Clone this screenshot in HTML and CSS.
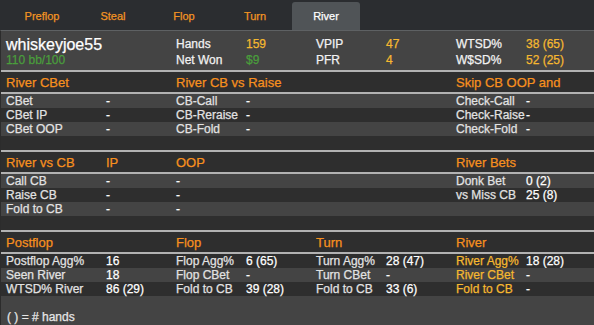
FILE: index.html
```html
<!DOCTYPE html>
<html>
<head>
<meta charset="utf-8">
<link rel="stylesheet" href="styles.css">
</head>
<body>
<div class="tabs">
  <div class="tab">Preflop</div>
  <div class="tab">Steal</div>
  <div class="tab">Flop</div>
  <div class="tab">Turn</div>
  <div class="tab active">River</div>
</div>
<div class="panel">
  <div class="grid head">
    <div class="name-cell">
      <div class="name">whiskeyjoe55</div>
      <div class="green small">110 bb/100</div>
    </div>
    <div class="c2">Hands</div><div class="c3 yellow">159</div>
    <div class="c4">VPIP</div><div class="c5 yellow">47</div>
    <div class="c6">WTSD%</div><div class="c7 yellow">38 (65)</div>
    <div class="c2">Net Won</div><div class="c3 green">$9</div>
    <div class="c4">PFR</div><div class="c5 yellow">4</div>
    <div class="c6">W$SD%</div><div class="c7 yellow">52 (25)</div>
  </div>
  <div class="sep"></div>

  <div class="grid sec-h">
    <div class="c0">River CBet</div>
    <div class="c2">River CB vs Raise</div>
    <div class="c6 wide">Skip CB OOP and</div>
  </div>
  <div class="sep"></div>
  <div class="grid row light">
    <div class="c0">CBet</div><div class="c1 v">-</div>
    <div class="c2">CB-Call</div><div class="c3 v">-</div>
    <div class="c6">Check-Call</div><div class="c7 v">-</div>
  </div>
  <div class="grid row dark">
    <div class="c0">CBet IP</div><div class="c1 v">-</div>
    <div class="c2">CB-Reraise</div><div class="c3 v">-</div>
    <div class="c6">Check-Raise</div><div class="c7 v">-</div>
  </div>
  <div class="grid row light">
    <div class="c0">CBet OOP</div><div class="c1 v">-</div>
    <div class="c2">CB-Fold</div><div class="c3 v">-</div>
    <div class="c6">Check-Fold</div><div class="c7 v">-</div>
  </div>
  <div class="spacer dark"></div>
  <div class="sep"></div>

  <div class="grid sec-h">
    <div class="c0">River vs CB</div>
    <div class="c1">IP</div>
    <div class="c2">OOP</div>
    <div class="c6">River Bets</div>
  </div>
  <div class="sep"></div>
  <div class="grid row light">
    <div class="c0">Call CB</div><div class="c1 v">-</div>
    <div class="c2 v">-</div>
    <div class="c6">Donk Bet</div><div class="c7 v">0 (2)</div>
  </div>
  <div class="grid row dark">
    <div class="c0">Raise CB</div><div class="c1 v">-</div>
    <div class="c2 v">-</div>
    <div class="c6">vs Miss CB</div><div class="c7 v">25 (8)</div>
  </div>
  <div class="grid row light">
    <div class="c0">Fold to CB</div><div class="c1 v">-</div>
    <div class="c2 v">-</div>
  </div>
  <div class="spacer dark"></div>
  <div class="sep"></div>

  <div class="grid sec-h">
    <div class="c0">Postflop</div>
    <div class="c2">Flop</div>
    <div class="c4">Turn</div>
    <div class="c6">River</div>
  </div>
  <div class="sep"></div>
  <div class="grid row dark">
    <div class="c0">Postflop Agg%</div><div class="c1 v">16</div>
    <div class="c2">Flop Agg%</div><div class="c3 v">6 (65)</div>
    <div class="c4">Turn Agg%</div><div class="c5 v">28 (47)</div>
    <div class="c6 yellow">River Agg%</div><div class="c7 v">18 (28)</div>
  </div>
  <div class="grid row light">
    <div class="c0">Seen River</div><div class="c1 v">18</div>
    <div class="c2">Flop CBet</div><div class="c3 v">-</div>
    <div class="c4">Turn CBet</div><div class="c5 v">-</div>
    <div class="c6 yellow">River CBet</div><div class="c7 v">-</div>
  </div>
  <div class="grid row dark">
    <div class="c0">WTSD% River</div><div class="c1 v">86 (29)</div>
    <div class="c2">Fold to CB</div><div class="c3 v">39 (28)</div>
    <div class="c4">Fold to CB</div><div class="c5 v">33 (6)</div>
    <div class="c6 yellow">Fold to CB</div><div class="c7 v">-</div>
  </div>
  <div class="footer">( ) = # hands</div>
</div>
</body>
</html>
```
FILE: styles.css
```css
html, body {
  margin: 0;
  padding: 0;
}
body {
  width: 594px;
  height: 325px;
  overflow: hidden;
  background: #2b2d30;
  font-family: "Liberation Sans", Arial, sans-serif;
  color: #e6e6e6;
  -webkit-text-stroke: 0.25px currentColor;
}
.tabs {
  display: flex;
  gap: 3px;
  height: 30px;
  padding-left: 8px;
  box-sizing: border-box;
  padding-top: 2px;
  background: #2b2d30;
}
.tab {
  width: 68px;
  height: 28px;
  box-sizing: border-box;
  padding-top: 1px;
  line-height: 27px;
  text-align: center;
  font-size: 11px;
  color: #f29423;
  border-radius: 3px 3px 0 0;
}
.tab.active {
  background: #505457;
  color: #ffffff;
}
.panel {
  background: #444444;
  border-top: 1px solid #5e6163;
  border-left: 1px solid #2c2c2c;
  border-bottom: 1px solid #5a5c5a;
  height: 294px;
  display: flex;
  flex-direction: column;
}
.grid {
  display: grid;
  grid-template-columns: 100px repeat(6, 70px) 1fr;
  padding-left: 5px;
  font-size: 12px;
  white-space: nowrap;
}
.c0 { grid-column: 1; }
.c1 { grid-column: 2; }
.c2 { grid-column: 3; }
.c3 { grid-column: 4; }
.c4 { grid-column: 5; }
.c5 { grid-column: 6; }
.c6 { grid-column: 7; }
.c7 { grid-column: 8; }
.wide { grid-column: 7 / 9; }
.head {
  grid-template-rows: 16px 16px;
  padding-top: 5px;
  height: 39px;
  box-sizing: border-box;
  line-height: 16px;
  color: #f2f2f2;
}
.name-cell {
  grid-column: 1 / 3;
  grid-row: 1 / 3;
}
.name {
  font-size: 16px;
  line-height: 17px;
  color: #ffffff;
}
.small {
  font-size: 12px;
  line-height: 13px;
  padding-top: 1px;
}
.green { color: #4a9e3c; }
.yellow { color: #f5b830; }
.sep {
  height: 2px;
  background: #b2b2b2;
  flex: none;
}
.sec-h {
  height: 20px;
  box-sizing: border-box;
  padding-top: 2px;
  line-height: 18px;
  font-size: 13px;
  color: #f7901e;
  background: #2e2e2e;
  flex: none;
}
.row {
  height: 14px;
  line-height: 14px;
  flex: none;
  color: #e2e2e2;
}
.row .v { color: #ffffff; }
.light { background: #444444; }
.dark { background: #2e2e2e; }
.spacer {
  height: 14px;
  flex: none;
}
.footer {
  flex: 1;
  padding-top: 14px;
  padding-left: 6px;
  font-size: 12px;
  line-height: 14px;
  color: #e6e6e6;
}
```
